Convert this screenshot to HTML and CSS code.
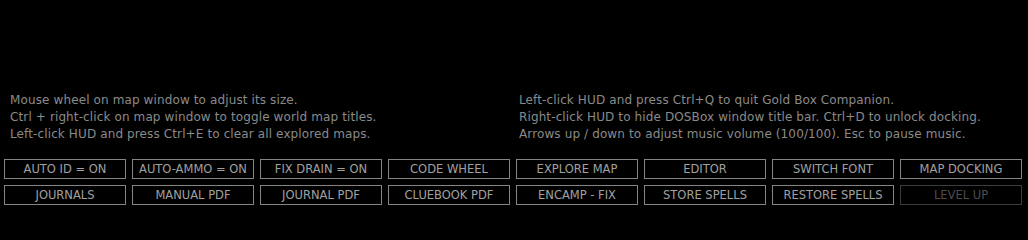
FILE: index.html
```html
<!DOCTYPE html>
<html>
<head>
<meta charset="utf-8">
<link rel="stylesheet" href="styles.css">
</head>
<body>
<div class="hud">
  <div class="help">
    <div class="col">
      <div>Mouse wheel on map window to adjust its size.</div>
      <div>Ctrl + right-click on map window to toggle world map titles.</div>
      <div>Left-click HUD and press Ctrl+E to clear all explored maps.</div>
    </div>
    <div class="col">
      <div>Left-click HUD and press Ctrl+Q to quit Gold Box Companion.</div>
      <div>Right-click HUD to hide DOSBox window title bar. Ctrl+D to unlock docking.</div>
      <div>Arrows up / down to adjust music volume (100/100). Esc to pause music.</div>
    </div>
  </div>
  <div class="buttons">
    <div class="btn">AUTO ID = ON</div>
    <div class="btn">AUTO-AMMO = ON</div>
    <div class="btn">FIX DRAIN = ON</div>
    <div class="btn">CODE WHEEL</div>
    <div class="btn">EXPLORE MAP</div>
    <div class="btn">EDITOR</div>
    <div class="btn">SWITCH FONT</div>
    <div class="btn">MAP DOCKING</div>
    <div class="btn">JOURNALS</div>
    <div class="btn">MANUAL PDF</div>
    <div class="btn">JOURNAL PDF</div>
    <div class="btn">CLUEBOOK PDF</div>
    <div class="btn">ENCAMP - FIX</div>
    <div class="btn">STORE SPELLS</div>
    <div class="btn">RESTORE SPELLS</div>
    <div class="btn disabled">LEVEL UP</div>
  </div>
</div>
</body>
</html>
```
FILE: styles.css
```css
html, body {
  margin: 0;
  padding: 0;
  background: #000;
}
.hud {
  box-sizing: border-box;
  width: 1028px;
  height: 217px;
  display: flex;
  flex-direction: column;
  justify-content: flex-end;
  padding: 0 6px 12px 4px;
  font-family: "DejaVu Sans", Verdana, sans-serif;
}
.help {
  display: grid;
  grid-template-columns: 509px 1fr;
  padding-left: 6px;
  color: #8a8a8a;
  font-size: 12px;
  letter-spacing: 0.12px;
  line-height: 17px;
  white-space: nowrap;
}
.buttons {
  margin-top: 16px;
  display: grid;
  grid-template-columns: repeat(8, 122px);
  grid-auto-rows: 20px;
  column-gap: 6px;
  row-gap: 6px;
  font-size: 11.5px;
}
.btn {
  box-sizing: border-box;
  border: 1px solid #848484;
  color: #a0a0a0;
  display: flex;
  align-items: center;
  justify-content: center;
  white-space: nowrap;
}
.btn.disabled {
  border-color: #3c3c3c;
  color: #4c4c4c;
}
```
